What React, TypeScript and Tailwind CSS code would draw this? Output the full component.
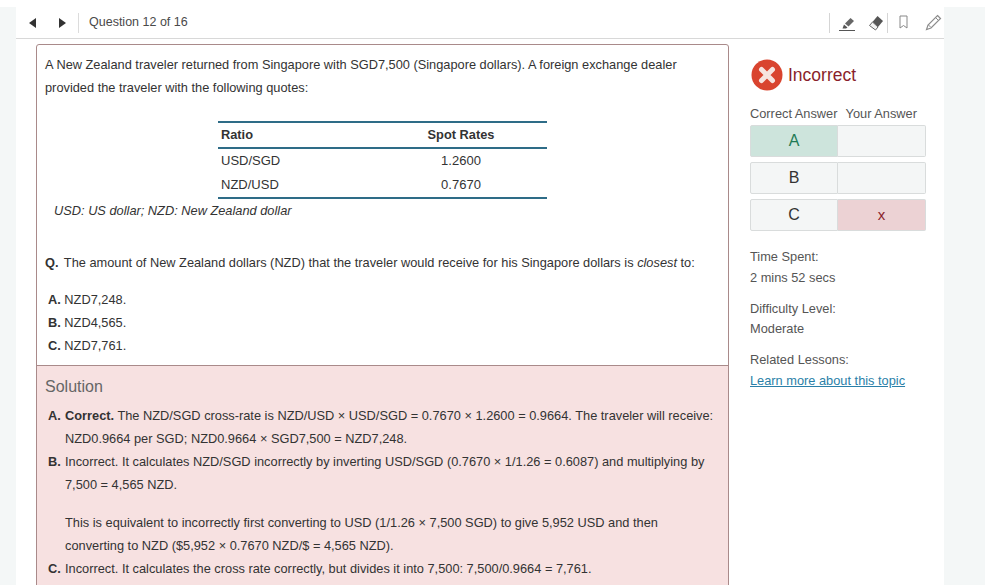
const font = { fontFamily: '"Liberation Sans", Arial, sans-serif' };

function Cell({ children, className = "" }: { children?: React.ReactNode; className?: string }) {
  return <div className={`flex items-center justify-center h-[32px] border border-[#d9dcdc] ${className}`}>{children}</div>;
}

function Row({ left, right, leftClass = "bg-[#f4f6f6] text-[#333] text-[16px]", rightClass = "bg-[#f4f6f6]" }: { left: string; right?: string; leftClass?: string; rightClass?: string }) {
  return (
    <div className="grid grid-cols-[88px_88px]">
      <Cell className={`rounded-l-[2px] ${leftClass}`}>{left}</Cell>
      <Cell className={`rounded-r-[2px] border-l-0 ${rightClass}`}>{right}</Cell>
    </div>
  );
}

export default function App() {
  return (
    <div className="w-[985px] h-[585px] overflow-hidden bg-white" style={font}>
      <div className="h-[7px] bg-white" />
      <div className="h-[578px] bg-[#f4f7f7] pl-[16px] pr-[41px]">
        <div className="h-[578px] bg-white overflow-hidden">
          <div className="h-[32px] border-b border-[#d8d8d8] flex items-center">
            <div className="flex items-center pl-[13px] w-[62px]">
              <svg width="8" height="10" viewBox="0 0 8 10"><path d="M7 0v10L0 5z" fill="#333" /></svg>
              <svg width="8" height="10" viewBox="0 0 8 10" className="ml-[21px]"><path d="M1 0v10l7-5z" fill="#333" /></svg>
            </div>
            <div className="h-[20px] w-px bg-[#dcdcdc]" />
            <div className="ml-[10px] text-[12.5px] text-[#4a4a4a]">Question 12 of 16</div>
            <div className="ml-auto flex items-center pr-[2px]">
              <div className="h-[20px] w-px bg-[#d5d5d5]" />
              <svg width="17" height="17" viewBox="0 0 17 17" className="ml-[9px] mt-[1px]">
                <path d="M6 8.500L11.500 3l3.500 3-5.500 5.500z" fill="#666" />
                <path d="M5 9.500l3.500 3-1.500 1H3.500z" fill="#555" />
                <path d="M0 15.500h16" stroke="#555" strokeWidth="1" />
              </svg>
              <svg width="16" height="16" viewBox="0 0 16 16" className="ml-[12px] mt-[1px]">
                <path d="M9.500 1L15 6l-5 6-5.500-5z" fill="#555" />
                <path d="M4.500 7l5.500 5-2.500 3L1.500 10.500z" fill="#f2f2f2" stroke="#666" strokeWidth="1" />
              </svg>
              <div className="h-[20px] w-px bg-[#d5d5d5] ml-[3px]" />
              <svg width="9" height="15" viewBox="0 0 9 15" className="ml-[11px]">
                <path d="M1 1h7v12l-3.500-2.500L1 13z" fill="none" stroke="#888" strokeWidth="1" />
              </svg>
              <svg width="17" height="17" viewBox="0 0 17 17" className="ml-[17px]">
                <path d="M12.500 1.500l3 3-9.500 9.500-4.500 1.500 1.500-4.500z" fill="none" stroke="#8c8c8c" strokeWidth="1.200" />
                <path d="M10.500 3.500l3 3M3.500 11l2.500 2.500" stroke="#8c8c8c" strokeWidth="1" />
              </svg>
            </div>
          </div>
          <div className="flex pl-[20px] pt-[5px]">
            <div className="w-[693px] border border-[#a98a8a] rounded-t-[3px] text-[12.8px] text-[#333]">
              <div className="h-[321px] px-[8px] pt-[8px] border-b border-[#a98a8a]">
                <p className="leading-[23px]">A New Zealand traveler returned from Singapore with SGD7,500 (Singapore dollars). A foreign exchange dealer provided the traveler with the following quotes:</p>
                <table className="mt-[22px] ml-[173px] w-[329px] table-fixed border-y-2 border-[#2e6c87] text-[13px] border-collapse">
                  <thead>
                    <tr className="border-b-2 border-[#2e6c87] h-[26px] text-[12.8px]">
                      <th className="w-[157px] text-left pl-[3px] font-bold">Ratio</th>
                      <th className="text-center font-bold">Spot Rates</th>
                    </tr>
                  </thead>
                  <tbody>
                    <tr className="h-[25px]"><td className="pl-[3px]">USD/SGD</td><td className="text-center">1.2600</td></tr>
                    <tr className="h-[25px]"><td className="pl-[3px]">NZD/USD</td><td className="text-center">0.7670</td></tr>
                  </tbody>
                </table>
                <p className="italic text-[12.8px] ml-[9px] mt-[2px]">USD: US dollar; NZD: New Zealand dollar</p>
                <p className="mt-[33px]"><b className="mr-[2px]">Q.</b> The amount of New Zealand dollars (NZD) that the traveler would receive for his Singapore dollars is <i>closest</i> to:</p>
                <div className="mt-[16px] ml-[3px] leading-[23px]">
                  <p><b>A.</b> NZD7,248.</p>
                  <p><b>B.</b> NZD4,565.</p>
                  <p><b>C.</b> NZD7,761.</p>
                </div>
              </div>
              <div className="bg-[#f7e1e1] pl-[8px] pr-[12px] pt-[10px] h-[300px]">
                <h2 className="text-[16px] text-[#666] leading-[22px]">Solution</h2>
                <div className="mt-[6px] ml-[3px] leading-[23px]">
                  <div className="flex"><b className="w-[17px] shrink-0">A.</b><p><b>Correct.</b> The NZD/SGD cross-rate is NZD/USD × USD/SGD = 0.7670 × 1.2600 = 0.9664. The traveler will receive: NZD0.9664 per SGD; NZD0.9664 × SGD7,500 = NZD7,248.</p></div>
                  <div className="flex"><b className="w-[17px] shrink-0">B.</b><p>Incorrect. It calculates NZD/SGD incorrectly by inverting USD/SGD (0.7670 × 1/1.26 = 0.6087) and multiplying by 7,500 = 4,565 NZD.</p></div>
                  <p className="ml-[17px] mt-[15px]">This is equivalent to incorrectly first converting to USD (1/1.26 × 7,500 SGD) to give 5,952 USD and then converting to NZD ($5,952 × 0.7670 NZD/$ = 4,565 NZD).</p>
                  <div className="flex"><b className="w-[17px] shrink-0">C.</b><p>Incorrect. It calculates the cross rate correctly, but divides it into 7,500: 7,500/0.9664 = 7,761.</p></div>
                </div>
              </div>
            </div>
            <div className="ml-[21px] w-[176px] text-[12.8px] text-[#555]">
              <div className="flex items-center mt-[15px] ml-[1px]">
                <svg width="32" height="32" viewBox="0 0 32 32">
                  <circle cx="16" cy="16" r="15.500" fill="#d9442f" />
                  <path d="M10.500 10.500l11 11M21.500 10.500l-11 11" stroke="#f6e4e0" strokeWidth="5" strokeLinecap="round" />
                </svg>
                <span className="ml-[5px] text-[17.5px] text-[#8a1f2b]">Incorrect</span>
              </div>
              <div className="flex justify-between mt-[13px] pr-[9px]"><span>Correct Answer</span><span>Your Answer</span></div>
              <div className="mt-[2px] flex flex-col gap-[5px]">
                <Row left="A" leftClass="bg-[#cde4dc] text-[#1f7a55] text-[16px]" />
                <Row left="B" />
                <Row left="C" right="x" rightClass="bg-[#ecd2d4] text-[#8a1f2b] text-[15px]" />
              </div>
              <p className="mt-[15px] leading-[21px]">Time Spent:<br />2 mins 52 secs</p>
              <p className="mt-[11px] leading-[20px]">Difficulty Level:<br />Moderate</p>
              <p className="mt-[10px] leading-[21px]">Related Lessons:<br /><a className="text-[#2a7fa8] underline">Learn more about this topic</a></p>
            </div>
          </div>
        </div>
      </div>
    </div>
  );
}
